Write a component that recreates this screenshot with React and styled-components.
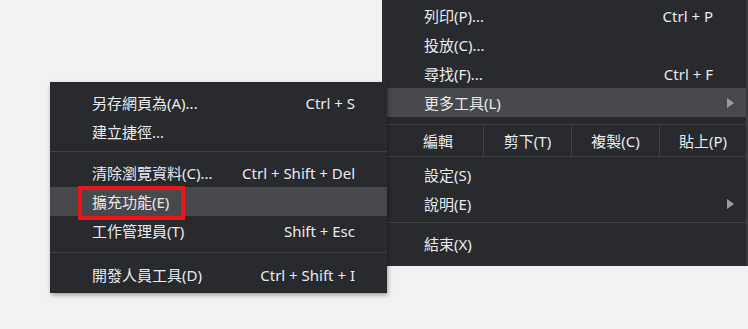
import styled, { createGlobalStyle } from "styled-components"

const GlobalStyle = createGlobalStyle`
  html, body {
    margin: 0;
    padding: 0;
    background: #f1f1f1;
    overflow: hidden;
  }
  body {
    font-family: "Noto Sans", "Noto Sans CJK TC", sans-serif;
  }
`

const mainItems = [
  { label: "列印(P)...", shortcut: "Ctrl + P" },
  { label: "投放(C)..." },
  { label: "尋找(F)...", shortcut: "Ctrl + F" },
  { label: "更多工具(L)", arrow: true, active: true },
]

const toolItems = [
  [
    { label: "另存網頁為(A)...", shortcut: "Ctrl + S" },
    { label: "建立捷徑..." },
  ],
  [
    { label: "清除瀏覽資料(C)...", shortcut: "Ctrl + Shift + Del" },
    { label: "擴充功能(E)", active: true, marked: true },
    { label: "工作管理員(T)", shortcut: "Shift + Esc" },
  ],
  [{ label: "開發人員工具(D)", shortcut: "Ctrl + Shift + I" }],
]

function Arrow() {
  return (
    <svg width="7" height="10" viewBox="0 0 7 10">
      <path d="M0 0 L7 5 L0 10 Z" fill="#9a9ca0" />
    </svg>
  )
}

function Item({ item, pad }) {
  return (
    <Row active={item.active} pad={pad}>
      <Label>
        {item.label}
        {item.marked && <Mark />}
      </Label>
      {item.shortcut && <Shortcut>{item.shortcut}</Shortcut>}
      {item.arrow && <ArrowBox><Arrow /></ArrowBox>}
    </Row>
  )
}

export default function App() {
  return (
    <Canvas>
      <GlobalStyle />
      <MainMenu>
        {mainItems.map((it) => <Item key={it.label} item={it} pad={33} />)}
        <Divider top={7} bottom={0} />
        <EditRow>
          <EditLabel>編輯</EditLabel>
          <EditCell>剪下(T)</EditCell>
          <EditCell>複製(C)</EditCell>
          <EditCell>貼上(P)</EditCell>
        </EditRow>
        <Divider top={0} bottom={3} />
        <Item item={{ label: "設定(S)" }} pad={33} />
        <Item item={{ label: "說明(E)", arrow: true }} pad={33} />
        <Divider top={4} bottom={6} />
        <Item item={{ label: "結束(X)" }} pad={33} />
      </MainMenu>

      <ToolsMenu>
        {toolItems.map((group, i) => (
          <Group key={i}>
            {i > 0 && <Divider top={i === 1 ? 5 : 7} bottom={i === 1 ? 6 : 7} />}
            {group.map((it) => <Item key={it.label} item={it} pad={32} />)}
          </Group>
        ))}
      </ToolsMenu>
    </Canvas>
  )
}

const Canvas = styled.div`
  position: relative;
  width: 748px;
  height: 329px;
  overflow: hidden;
`
const Menu = styled.div`
  position: absolute;
  background: #292a2d;
  color: #e8eaed;
  font-size: 15px;
  display: flex;
  flex-direction: column;
`
const MainMenu = styled(Menu)`
  left: 382px;
  top: -5px;
  width: 366px;
  padding: 6px 0 8px;
  border-right: 2px solid #3a3b3f;
  box-sizing: border-box;
`
const ToolsMenu = styled(Menu)`
  left: 50px;
  top: 82px;
  width: 337px;
  padding: 6px 0 4px;
  box-shadow: 1px 2px 4px rgba(0, 0, 0, 0.35);
  z-index: 2;
`
const Group = styled.div`
  display: flex;
  flex-direction: column;
`
const Row = styled.div`
  position: relative;
  height: 29px;
  display: flex;
  align-items: center;
  padding: 0 ${(p) => p.pad}px 0 42px;
  background: ${(p) => (p.active ? "#48494c" : "transparent")};
`
const Label = styled.span`
  flex: 1;
  white-space: nowrap;
`
const Shortcut = styled.span`
  white-space: nowrap;
`
const ArrowBox = styled.span`
  position: absolute;
  right: 12px;
  top: 10px;
  display: flex;
`
const Mark = styled.span`
  position: absolute;
  left: 28px;
  top: -1px;
  width: 107px;
  height: 34px;
  border: 4px solid #e8151b;
  box-sizing: border-box;
`
const Divider = styled.div`
  height: 1px;
  background: #404145;
  margin: ${(p) => p.top}px 0 ${(p) => p.bottom}px;
`
const EditRow = styled.div`
  display: grid;
  grid-template-columns: 101px 88px 88px 1fr;
  height: 31px;
`
const EditLabel = styled.div`
  display: flex;
  align-items: center;
  padding-left: 41px;
`
const EditCell = styled.div`
  display: flex;
  align-items: center;
  justify-content: center;
  border-left: 1px solid #404145;
`
